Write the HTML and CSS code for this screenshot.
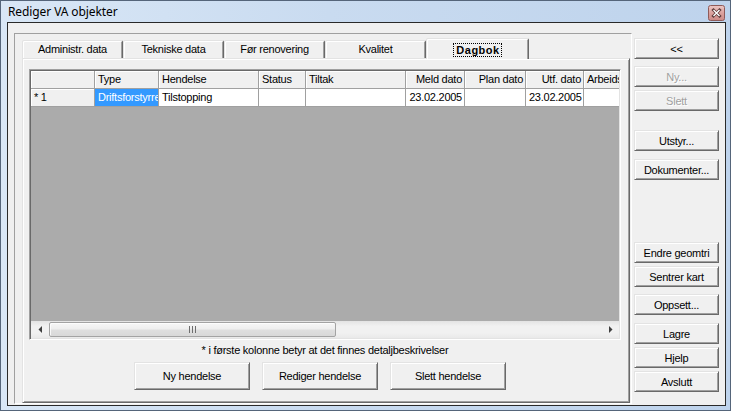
FILE: index.html
```html
<!DOCTYPE html>
<html lang="no">
<head>
<meta charset="utf-8">
<title>Rediger VA objekter</title>
<link rel="stylesheet" href="styles.css">
</head>
<body>
<div class="window">
  <div class="titlebar">
    <span class="title">Rediger VA objekter</span>
    <svg class="close" width="17" height="16" viewBox="0 0 17 16">
      <defs>
        <linearGradient id="cg" x1="0" y1="0" x2="0" y2="1">
          <stop offset="0" stop-color="#ecc8c6"/>
          <stop offset="0.5" stop-color="#dba19d"/>
          <stop offset="1" stop-color="#cc8a86"/>
        </linearGradient>
      </defs>
      <rect x="0.5" y="0.5" width="16" height="15" rx="2" fill="url(#cg)" stroke="#8f5b59"/>
      <path d="M5.5 5 L11.5 11 M11.5 5 L5.5 11" stroke="#5e3a39" stroke-width="3" stroke-linecap="square"/>
      <path d="M5.5 5 L11.5 11 M11.5 5 L5.5 11" stroke="#ffffff" stroke-width="1.4"/>
    </svg>
  </div>
  <div class="client">
    <div class="panel">
      <div class="tabs">
        <div class="tab">Administr. data</div>
        <div class="tab">Tekniske data</div>
        <div class="tab">Før renovering</div>
        <div class="tab">Kvalitet</div>
        <div class="tab active"><span class="focus">Dagbok</span></div>
      </div>
      <div class="sheet">
        <div class="grid">
          <div class="grid-rows">
            <div class="grid-row">
              <div class="cell fixed c-ind"></div>
              <div class="cell fixed c-type">Type</div>
              <div class="cell fixed c-hend">Hendelse</div>
              <div class="cell fixed c-status">Status</div>
              <div class="cell fixed c-tiltak">Tiltak</div>
              <div class="cell fixed num c-meld">Meld dato</div>
              <div class="cell fixed num c-plan">Plan dato</div>
              <div class="cell fixed num c-utf">Utf. dato</div>
              <div class="cell fixed c-arb">Arbeids</div>
            </div>
            <div class="grid-row">
              <div class="cell fixed c-ind">* 1</div>
              <div class="cell sel c-type">Driftsforstyrre</div>
              <div class="cell c-hend">Tilstopping</div>
              <div class="cell c-status"></div>
              <div class="cell c-tiltak"></div>
              <div class="cell num c-meld">23.02.2005</div>
              <div class="cell num c-plan"></div>
              <div class="cell num c-utf">23.02.2005</div>
              <div class="cell c-arb"></div>
            </div>
          </div>
          <div class="hscroll">
            <div class="sb-arrow">
              <svg width="4" height="7" viewBox="0 0 4 7"><path d="M4 0 V7 L0.5 3.5 Z" fill="#3f3f3f"/></svg>
            </div>
            <div class="sb-track">
              <div class="sb-thumb">
                <svg width="7" height="7" viewBox="0 0 7 7"><path d="M0.5 0 V7 M3.5 0 V7 M6.5 0 V7" stroke="#6e6e6e"/></svg>
              </div>
            </div>
            <div class="sb-arrow">
              <svg width="4" height="7" viewBox="0 0 4 7"><path d="M0 0 V7 L3.5 3.5 Z" fill="#3f3f3f"/></svg>
            </div>
          </div>
        </div>
        <p class="note">* i første kolonne betyr at det finnes detaljbeskrivelser</p>
        <div class="actions">
          <button class="btn big">Ny hendelse</button>
          <button class="btn big">Rediger hendelse</button>
          <button class="btn big">Slett hendelse</button>
        </div>
      </div>
    </div>
    <div class="side">
      <div class="grp">
        <button class="btn">&lt;&lt;</button>
      </div>
      <div class="grp m7">
        <button class="btn disabled">Ny...</button>
        <button class="btn disabled">Slett</button>
      </div>
      <div class="grp m19">
        <button class="btn">Utstyr...</button>
      </div>
      <div class="grp m8">
        <button class="btn">Dokumenter...</button>
      </div>
      <div class="grp m62">
        <button class="btn">Endre geomtri</button>
        <button class="btn">Sentrer kart</button>
      </div>
      <div class="grp m7">
        <button class="btn">Oppsett...</button>
      </div>
      <div class="grp m8">
        <button class="btn">Lagre</button>
        <button class="btn">Hjelp</button>
        <button class="btn">Avslutt</button>
      </div>
    </div>
  </div>
</div>
</body>
</html>
```

FILE: styles.css
```css
* { box-sizing: border-box; }
html, body { margin: 0; padding: 0; }
body {
  width: 731px;
  height: 411px;
  overflow: hidden;
  background: #c4d7ee;
  font-family: "Liberation Sans", Arial, sans-serif;
  font-size: 11px;
  letter-spacing: -0.25px;
  color: #000;
}

.window {
  width: 731px;
  height: 411px;
  border: 1px solid #55657a;
  background: linear-gradient(to right, #d9e7f6 0, #c9dbf0 45%, #bed3ec 100%);
  padding: 0 4px 4px 6px;
  display: flex;
  flex-direction: column;
}

.titlebar {
  height: 21px;
  flex: none;
  display: flex;
  justify-content: space-between;
  align-items: flex-start;
}
.title {
  font-family: "Noto Sans", "Open Sans", sans-serif;
  font-size: 12px;
  letter-spacing: -0.1px;
  line-height: 16px;
  padding: 3px 0 0 1px;
}
.close { display: block; margin: 4px 1px 0 0; }

.client {
  flex: 1;
  border: 1px solid #2a2a2a;
  background: #f0f0f0;
  padding: 10px 6px 1px 6px;
  display: flex;
  align-items: flex-start;
}

.panel {
  width: 618px;
  height: 371px;
  flex: none;
  border: 1px solid;
  border-color: #a0a0a0 #fff #fff #a0a0a0;
  padding: 4px 1px 0 7px;
  display: flex;
  flex-direction: column;
}

.tabs {
  height: 20px;
  flex: none;
  display: flex;
  align-items: flex-end;
  position: relative;
  z-index: 1;
}
.tab {
  width: 101px;
  height: 18px;
  flex: none;
  border: 1px solid;
  border-bottom: 0;
  border-color: #e3e3e3 #696969 transparent #e3e3e3;
  border-radius: 2px 2px 0 0;
  box-shadow: inset 1px 1px #fff, inset -1px 0 #a0a0a0;
  background: #f0f0f0;
  text-align: center;
  line-height: 16px;
  white-space: nowrap;
}
.tab.active {
  width: 103px;
  height: 21px;
  margin-bottom: -1px;
  font-weight: bold;
  letter-spacing: 0.5px;
  display: flex;
  justify-content: center;
  align-items: flex-start;
  padding-top: 5px;
}
.focus {
  display: inline-block;
  line-height: 12px;
  padding: 0 1px 0 2px;
  outline: 1px dotted #000;
}

.sheet {
  flex: 1;
  border: 1px solid;
  border-color: #e3e3e3 #696969 #696969 #e3e3e3;
  box-shadow: inset 1px 1px #fff, inset -1px -1px #a0a0a0;
  padding: 10px 8px 0 6px;
  display: flex;
  flex-direction: column;
}

.grid {
  height: 271px;
  flex: none;
  border: 1px solid;
  border-color: #a0a0a0 #fff #fff #a0a0a0;
  box-shadow: inset 1px 1px #696969, inset -1px -1px #e3e3e3;
  padding: 1px;
  display: flex;
  flex-direction: column;
}
.grid-rows {
  flex: 1;
  background: #ababab;
  overflow: hidden;
}
.grid-row { display: flex; height: 18px; }
.cell {
  flex: none;
  height: 18px;
  border-right: 1px solid #a0a0a0;
  border-bottom: 1px solid #a0a0a0;
  padding: 0 2px 0 3px;
  line-height: 17px;
  white-space: nowrap;
  overflow: hidden;
  background: #fff;
}
.cell.fixed { background: #f0f0f0; box-shadow: inset 1px 1px #fff; }
.cell.num { text-align: right; }
.cell.sel { background: #3399ff; color: #fff; }
.c-ind { width: 64px; }
.c-type { width: 64px; }
.c-hend { width: 100px; }
.c-status { width: 47px; }
.c-tiltak { width: 100px; }
.c-meld { width: 59px; }
.c-plan { width: 61px; }
.c-utf { width: 58px; }
.c-arb { width: 90px; }

.hscroll {
  height: 17px;
  flex: none;
  display: flex;
  background: linear-gradient(#e3e3e3, #f1f1f1 30%, #f1f1f1 70%, #e9e9e9);
}
.sb-arrow {
  width: 17px;
  height: 17px;
  flex: none;
  display: flex;
  align-items: center;
  justify-content: center;
}
.sb-arrow svg { display: block; }
.sb-track { flex: 1; padding: 1px 0; }
.sb-thumb {
  width: 287px;
  height: 15px;
  margin-left: 1px;
  border: 1px solid #a3a3a3;
  border-radius: 2px;
  background: linear-gradient(#f7f7f7, #eeeeee 48%, #dfdfdf 52%, #d8d8d8);
  box-shadow: inset 1px 1px rgba(255,255,255,0.8);
  display: flex;
  align-items: center;
  justify-content: center;
}
.sb-thumb svg { display: block; }

.note {
  margin: 4px 0 0;
  height: 13px;
  line-height: 13px;
  text-align: center;
}
.actions {
  display: flex;
  gap: 12px;
  margin: 5px 0 0 105px;
}

.btn {
  font: inherit;
  letter-spacing: inherit;
  color: #000;
  background: #f0f0f0;
  border: 1px solid;
  border-color: #e3e3e3 #696969 #696969 #e3e3e3;
  box-shadow: inset 1px 1px #fff, inset -1px -1px #a0a0a0;
  margin: 0;
  padding: 0;
  text-align: center;
  white-space: nowrap;
  appearance: none;
  -webkit-appearance: none;
  border-radius: 0;
}
.btn.big { width: 116px; height: 28px; }
.btn.disabled { color: #a0a0a0; text-shadow: 1px 1px 0 #fff; }

.side {
  width: 85px;
  flex: none;
  margin-left: 2px;
  padding-top: 5px;
  display: flex;
  flex-direction: column;
}
.side .btn { width: 85px; height: 21px; line-height: 18px; }
.grp { display: flex; flex-direction: column; gap: 3px; }
.m7 { margin-top: 7px; }
.m8 { margin-top: 8px; }
.m19 { margin-top: 19px; }
.m62 { margin-top: 62px; }
```
